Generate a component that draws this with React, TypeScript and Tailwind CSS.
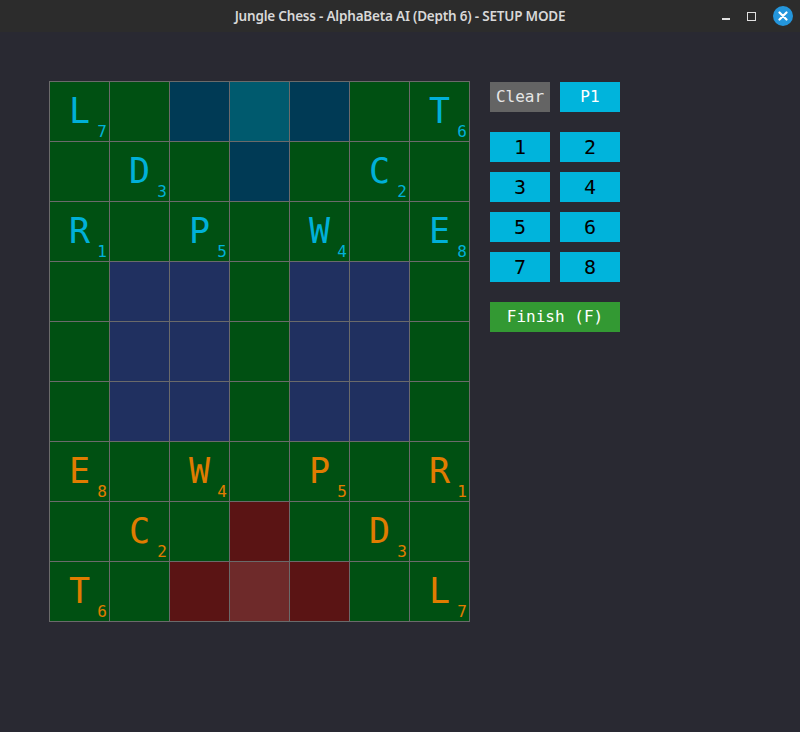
import React from 'react';

type Piece = { ch: string; rank: number; side: 'blue' | 'orange' };

const ROWS = 9;
const COLS = 7;

// piece placement keyed by "row,col"
const pieces: Record<string, Piece> = {
  '0,0': { ch: 'L', rank: 7, side: 'blue' },
  '0,6': { ch: 'T', rank: 6, side: 'blue' },
  '1,1': { ch: 'D', rank: 3, side: 'blue' },
  '1,5': { ch: 'C', rank: 2, side: 'blue' },
  '2,0': { ch: 'R', rank: 1, side: 'blue' },
  '2,2': { ch: 'P', rank: 5, side: 'blue' },
  '2,4': { ch: 'W', rank: 4, side: 'blue' },
  '2,6': { ch: 'E', rank: 8, side: 'blue' },
  '6,0': { ch: 'E', rank: 8, side: 'orange' },
  '6,2': { ch: 'W', rank: 4, side: 'orange' },
  '6,4': { ch: 'P', rank: 5, side: 'orange' },
  '6,6': { ch: 'R', rank: 1, side: 'orange' },
  '7,1': { ch: 'C', rank: 2, side: 'orange' },
  '7,5': { ch: 'D', rank: 3, side: 'orange' },
  '8,0': { ch: 'T', rank: 6, side: 'orange' },
  '8,6': { ch: 'L', rank: 7, side: 'orange' },
};

function cellColor(r: number, c: number): string {
  if (r === 0 && c === 3) return 'bg-[#005a6e]';
  if (r === 8 && c === 3) return 'bg-[#6e2a2a]';
  if ((r === 0 && (c === 2 || c === 4)) || (r === 1 && c === 3)) return 'bg-[#003a55]';
  if ((r === 8 && (c === 2 || c === 4)) || (r === 7 && c === 3)) return 'bg-[#5a1414]';
  if (r >= 3 && r <= 5 && (c === 1 || c === 2 || c === 4 || c === 5)) return 'bg-[#203060]';
  return 'bg-[#005012]';
}

function Cell({ r, c }: { r: number; c: number }) {
  const p = pieces[`${r},${c}`];
  const color = p ? (p.side === 'blue' ? 'text-[#00b0d8]' : 'text-[#e07c00]') : '';
  return (
    <div className={`relative w-[59px] h-[59px] ${cellColor(r, c)} ${color}`}>
      {p && (
        <>
          <div className="flex h-full items-center justify-center text-[35px] leading-none">{p.ch}</div>
          <span className="absolute right-[2px] bottom-[1px] text-[16px] leading-none">{p.rank}</span>
        </>
      )}
    </div>
  );
}

function Btn({ label, className }: { label: string; className: string }) {
  return (
    <div className={`flex h-[30px] items-center justify-center ${className}`}>{label}</div>
  );
}

export default function App() {
  const cells = [];
  for (let r = 0; r < ROWS; r++) {
    for (let c = 0; c < COLS; c++) {
      cells.push(<Cell key={`${r}-${c}`} r={r} c={c} />);
    }
  }

  return (
    <div className="flex h-[732px] w-[800px] flex-col bg-[#292932] font-['DejaVu_Sans_Mono',monospace]">
      {/* window title bar */}
      <div className="relative flex h-[32px] items-center justify-center bg-[#2c2c2c] font-['Noto_Sans',sans-serif] text-[13.5px] font-semibold text-[#d8d8d8]">
        <span className="tracking-[-0.2px]">Jungle Chess - AlphaBeta AI (Depth 6) - SETUP MODE</span>
        <div className="absolute right-[7px] top-0 flex h-full items-center gap-[17px]">
          <div className="mt-[6px] h-[1.5px] w-[8px] bg-[#e0e0e0]" />
          <div className="h-[9px] w-[9px] border-[1.5px] border-[#e0e0e0]" />
          <div className="flex h-[20px] w-[20px] items-center justify-center rounded-full bg-[#2496dc]">
            <svg width="10" height="10" viewBox="0 0 10 10">
              <path d="M1.5 1.5 L8.5 8.5 M8.5 1.5 L1.5 8.5" stroke="white" strokeWidth="2.2" strokeLinecap="round" />
            </svg>
          </div>
        </div>
      </div>

      <div className="flex gap-[20px] pl-[49px] pt-[49px]">
        <div className="grid grid-cols-[repeat(7,59px)] gap-px self-start border border-[#6a6a6a] bg-[#6a6a6a]">
          {cells}
        </div>

        <div className="flex w-[130px] flex-col pt-[1px]">
          <div className="grid grid-cols-2 gap-x-[10px]">
            <Btn label="Clear" className="bg-[#646464] text-[16px] text-[#e6e6e6]" />
            <Btn label="P1" className="bg-[#00b4dc] text-[16px] text-white" />
          </div>
          <div className="mt-[20px] grid grid-cols-2 gap-x-[10px] gap-y-[10px]">
            {[1, 2, 3, 4, 5, 6, 7, 8].map((n) => (
              <Btn key={n} label={String(n)} className="bg-[#00b4dc] text-[20px] text-black" />
            ))}
          </div>
          <div className="mt-[20px]">
            <Btn label="Finish (F)" className="bg-[#339933] text-[16px] text-white" />
          </div>
        </div>
      </div>
    </div>
  );
}
